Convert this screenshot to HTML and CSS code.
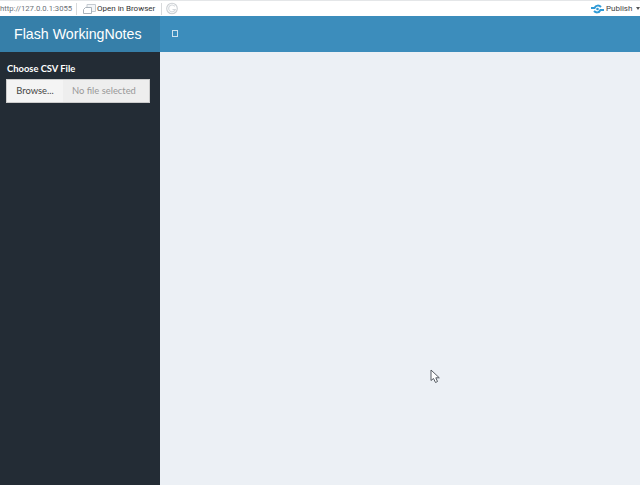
FILE: index.html
```html
<!DOCTYPE html>
<html lang="en">
<head>
<meta charset="utf-8">
<title>Flash WorkingNotes</title>
<link rel="stylesheet" href="styles.css">
</head>
<body>
<div class="toolbar">
  <span class="url">http://127.0.0.1:3055</span>
  <span class="sep"></span>
  <svg class="open-icon" width="13" height="11" viewBox="0 0 13 11"><path d="M4 4V1.500H12.500V8.500H9" fill="#f4f6f8" stroke="#c4cad0"/><path d="M0.500 6.500L2.500 4.500H8.500V10.500H0.500Z" fill="#fff" stroke="#aab2ba"/></svg>
  <span class="open">Open in Browser</span>
  <span class="sep"></span>
  <svg class="refresh" width="12" height="13" viewBox="0 0 12 13"><circle cx="6" cy="6.500" r="5.300" fill="none" stroke="#ccd0d4" stroke-width="1.100"/><path d="M8.800 4.400A3.400 3.400 0 1 0 9.300 7.500H6.500" fill="none" stroke="#d4d8dc" stroke-width="1.100"/></svg>
  <span class="spacer"></span>
  <svg class="publish-icon" width="13" height="10" viewBox="0 0 13 10"><path d="M0 4H3.500C5 1 8 1 10 3M13 6H9.500C8 9 5 9 3 7" fill="none" stroke="#2f9ad6" stroke-width="2"/><circle cx="6.500" cy="5" r="1.300" fill="#2f9ad6"/></svg>
  <span class="publish">Publish</span>
  <span class="caret"></span>
</div>
<div class="app">
  <header class="topbar">
    <div class="brand">Flash WorkingNotes</div>
    <div class="nav"><span class="toggle"></span></div>
  </header>
  <div class="main">
    <aside class="sidebar">
      <label class="field-label">Choose CSV File</label>
      <div class="file-input">
        <span class="browse">Browse...</span>
        <span class="file-name">No file selected</span>
      </div>
    </aside>
    <main class="content"></main>
  </div>
</div>
<svg class="cursor" width="11" height="15" viewBox="0 0 11 15"><path d="M1 1V11.500L3.500 9.500L5.500 13.500L7.500 12.500L5.800 8.800H9.300Z" fill="#fff" stroke="#555b62"/></svg>
</body>
</html>
```
FILE: styles.css
```css
* { box-sizing: border-box; }
html, body { margin: 0; height: 100%; overflow: hidden; }
body { width: 640px; height: 485px; display: flex; flex-direction: column; font-family: "Liberation Sans", sans-serif; position: relative; }
.toolbar { height: 16px; flex: none; display: flex; align-items: center; background: #fff; border-top: 1px solid #e4e6e8; font-family: Roboto, sans-serif; font-size: 8px; color: #333; white-space: nowrap; }
.url { color: #6c7278; font-size: 7.7px; width: 76px; }
.sep { width: 1px; height: 12px; background: #d8dadc; }
.open-icon { margin-left: 6px; }
.open { margin-left: 1px; width: 64px; }
.refresh { margin-left: 4px; }
.spacer { flex: 1; }
.publish { margin-left: 2px; color: #444; width: 30px; }
.caret { margin-right: 0; border: 2px solid transparent; border-top: 3px solid #555; border-bottom: 0; }
.app { flex: 1; display: flex; flex-direction: column; min-height: 0; }
.topbar { height: 36px; flex: none; display: flex; }
.brand { width: 160px; background: #367fa9; color: #fff; font-size: 14.2px; line-height: 37px; padding-left: 14px; }
.nav { flex: 1; background: #3c8dbc; display: flex; align-items: center; padding-left: 12px; padding-bottom: 1px; }
.toggle { width: 6px; height: 7px; border: 1px solid #cfe2ee; }
.main { flex: 1; display: flex; min-height: 0; }
.sidebar { width: 160px; background: #232c35; padding: 10px 10px 0 6px; }
.field-label { display: block; color: #fff; font-family: Lato, sans-serif; font-size: 9.4px; font-weight: 700; line-height: 13px; margin-bottom: 4px; padding-left: 1px; }
.file-input { display: flex; height: 24px; border: 1px solid #ccc; font-family: Lato, sans-serif; font-size: 9.4px; line-height: 22px; }
.browse { width: 56px; flex: none; background: #f4f4f4; color: #444; text-align: center; }
.file-name { flex: 1; background: #eee; color: #999; padding-left: 9px; white-space: nowrap; }
.content { flex: 1; background: #ecf0f5; }
.cursor { position: absolute; left: 430px; top: 369px; }
```
